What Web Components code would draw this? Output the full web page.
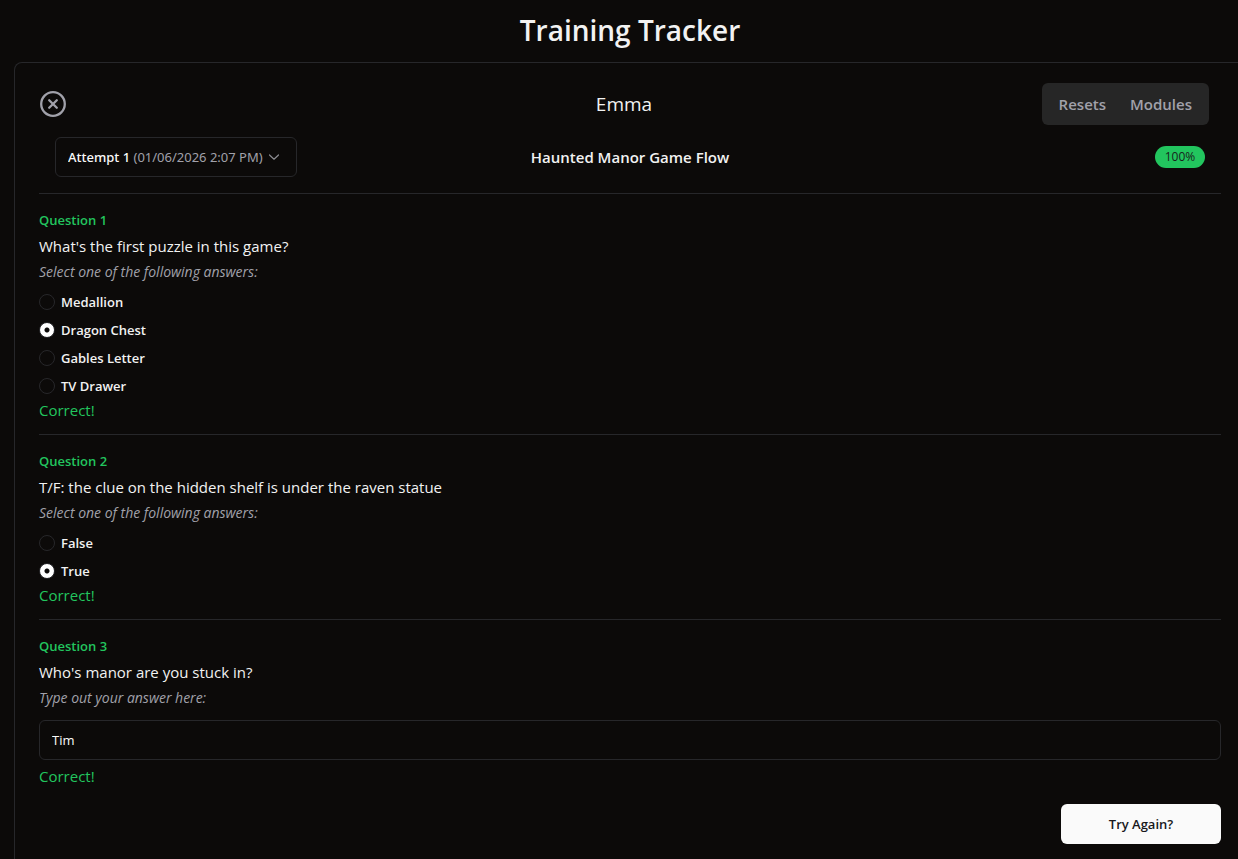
<!DOCTYPE html>
<html lang="en">
<head>
<meta charset="utf-8">
<meta name="viewport" content="width=device-width, initial-scale=1">
<title>Training Tracker</title>
<style>
  :root {
    --background: #0c0a09;
    --foreground: #f2f2f2;
    --muted: #a1a1aa;
    --border: #27272a;
    --success: #22c55e;
  }
  body {
    margin: 0;
    overflow-x: clip;
    background: var(--background);
    color: var(--foreground);
    font-family: "Open Sans", "Noto Sans", sans-serif;
    font-size: 15px;
    line-height: 24px;
  }
</style>
</head>
<body>
<training-tracker>
  <attempt-header slot="header" name="Emma" module="Haunted Manor Game Flow" score="100%"></attempt-header>
  <quiz-question label="Question 1" hint="Select one of the following answers:" options="Medallion|Dragon Chest|Gables Letter|TV Drawer" answer="Dragon Chest">What's the first puzzle in this game?</quiz-question>
  <quiz-question label="Question 2" hint="Select one of the following answers:" options="False|True" answer="True">T/F: the clue on the hidden shelf is under the raven statue</quiz-question>
  <quiz-question label="Question 3" hint="Type out your answer here:" answer="Tim">Who's manor are you stuck in?</quiz-question>
</training-tracker>

<template id="tracker-template">
  <style>
    :host { display: flex; flex-direction: column; min-height: 100vh; margin: 0 -8px 0 14px; }
    h1 { margin: 0; padding: 10px 0 12px; font-size: 28px; line-height: 40px; font-weight: 600; text-align: center; }
    main { box-sizing: border-box; flex: 1; padding: 20px 24px 15px; border: 1px solid var(--border); border-bottom: 0; border-radius: 8px 8px 0 0; }
    footer { display: flex; justify-content: flex-end; padding-top: 4px; }
    button { width: 160px; height: 40px; padding: 0; border: 0; border-radius: 6px; background: #fafafa; color: #18181b; font: 600 13px/20px "Open Sans", sans-serif; cursor: pointer; }
  </style>
  <h1>Training Tracker</h1>
  <main>
    <slot name="header"></slot>
    <slot></slot>
    <footer><button type="button">Try Again?</button></footer>
  </main>
</template>

<template id="header-template">
  <style>
    :host { display: block; }
    .top, .details { display: grid; grid-template-columns: 1fr auto 1fr; align-items: center; }
    .top { padding-right: 12px; }
    .details { padding: 12px 16px 16px; }
    .close { justify-self: start; display: flex; padding: 0; border: 0; background: none; color: var(--muted); cursor: pointer; }
    h2 { margin: 0; font-size: 19px; line-height: 28px; font-weight: 400; }
    h3 { margin: 0; font-size: 15px; line-height: 24px; font-weight: 600; }
    nav { justify-self: end; box-sizing: border-box; display: flex; gap: 24px; height: 42px; padding: 9px 17px; border-radius: 6px; background: #262626; }
    nav a { color: var(--muted); font-size: 15px; line-height: 24px; font-weight: 600; text-decoration: none; }
    select, select:hover {
      appearance: base-select; justify-self: start; box-sizing: border-box; display: flex; align-items: center;
      width: 242px; height: 40px; min-height: 0; margin: 0; padding: 0 12px; border: 1px solid var(--border); border-radius: 6px;
      background: var(--background); color: #fafafa; font: 500 13px/20px "Noto Sans", sans-serif; cursor: pointer;
    }
    select::picker-icon { display: none; }
    select button { display: flex; align-items: center; gap: 4px; white-space: nowrap; }
    .date { color: var(--muted); font-weight: 400; }
    .chevron { color: #8b8b90; flex: none; }
    .badge { justify-self: end; box-sizing: border-box; width: 50px; height: 22px; border-radius: 11px; background: var(--success); color: #18231c; font-size: 12px; line-height: 22px; font-weight: 500; text-align: center; }
  </style>
  <div class="top">
    <button class="close" type="button" aria-label="Close">
      <svg width="28" height="28" viewBox="0 0 28 28" fill="none" stroke="currentColor" stroke-width="2.3" stroke-linecap="round"><circle cx="14" cy="14" r="11.8"/><path d="M10.2 10.2l7.6 7.6M17.8 10.2l-7.6 7.6"/></svg>
    </button>
    <h2></h2>
    <nav aria-label="Sections"><a href="#resets">Resets</a><a href="#modules">Modules</a></nav>
  </div>
  <div class="details">
    <select aria-label="Attempt">
      <button>
        <selectedcontent></selectedcontent>
        <svg class="chevron" width="14" height="14" viewBox="0 0 14 14" fill="none" stroke="currentColor" stroke-width="1.2" stroke-linecap="round" stroke-linejoin="round"><path d="M2.5 5L7 9.2L11.5 5"/></svg>
      </button>
      <option selected>Attempt 1 <span class="date">(01/06/2026 2:07 PM)</span></option>
    </select>
    <h3></h3>
    <span class="badge"></span>
  </div>
</template>

<template id="question-template">
  <style>
    :host { display: block; padding: 16px 0 12px; border-top: 1px solid var(--border); }
    fieldset { margin: 0; padding: 0; border: 0; min-width: 0; }
    legend { padding: 0; color: var(--success); font-size: 13px; line-height: 20px; font-weight: 600; }
    p { margin: 0; }
    .prompt { padding: 4px 0; }
    .hint { color: var(--muted); font-size: 14px; line-height: 20px; font-style: italic; }
    .options { display: grid; gap: 8px; justify-items: start; padding: 10px 0 2px; }
    label { display: flex; align-items: center; gap: 6px; font-size: 13px; line-height: 20px; font-weight: 600; }
    input[type="radio"] { appearance: none; box-sizing: border-box; width: 16px; height: 16px; margin: 0; border: 1px solid var(--border); border-radius: 50%; }
    input[type="radio"]:checked { background: radial-gradient(circle, #0c0a09 2px, #fff 3px); }
    .text { display: block; padding: 12px 0 4px; }
    input[type="text"] { display: block; box-sizing: border-box; width: 100%; height: 40px; padding: 0 12px; border: 1px solid var(--border); border-radius: 6px; background: var(--background); color: #fafafa; font: 400 13px/20px "Open Sans", sans-serif; }
    .result { color: var(--success); }
  </style>
  <fieldset>
    <legend></legend>
    <p class="prompt"><slot></slot></p>
    <p class="hint"></p>
    <div class="answer"></div>
    <p class="result">Correct!</p>
  </fieldset>
</template>

<script>
  const attach = (host, id) => {
    const root = host.attachShadow({ mode: "open" });
    root.append(document.getElementById(id).content.cloneNode(true));
    return root;
  };

  class TrainingTracker extends HTMLElement {
    constructor() { super(); attach(this, "tracker-template"); }
  }

  class AttemptHeader extends HTMLElement {
    connectedCallback() {
      if (this.shadowRoot) return;
      const root = attach(this, "header-template");
      root.querySelector("h2").textContent = this.getAttribute("name");
      root.querySelector("h3").textContent = this.getAttribute("module");
      root.querySelector(".badge").textContent = this.getAttribute("score");
    }
  }

  class QuizQuestion extends HTMLElement {
    connectedCallback() {
      if (this.shadowRoot) return;
      const root = attach(this, "question-template");
      const label = this.getAttribute("label");
      const hint = this.getAttribute("hint");
      const answer = this.getAttribute("answer");
      const box = root.querySelector(".answer");
      root.querySelector("legend").textContent = label;
      root.querySelector(".hint").textContent = hint;
      if (this.hasAttribute("options")) {
        box.classList.add("options");
        for (const option of this.getAttribute("options").split("|")) {
          const row = document.createElement("label");
          const input = document.createElement("input");
          input.type = "radio";
          input.name = label;
          input.value = option;
          input.checked = option === answer;
          row.append(input, option);
          box.append(row);
        }
      } else {
        box.classList.add("text");
        const input = document.createElement("input");
        input.type = "text";
        input.value = answer;
        input.setAttribute("aria-label", hint);
        box.append(input);
      }
    }
  }

  customElements.define("training-tracker", TrainingTracker);
  customElements.define("attempt-header", AttemptHeader);
  customElements.define("quiz-question", QuizQuestion);
</script>
</body>
</html>
